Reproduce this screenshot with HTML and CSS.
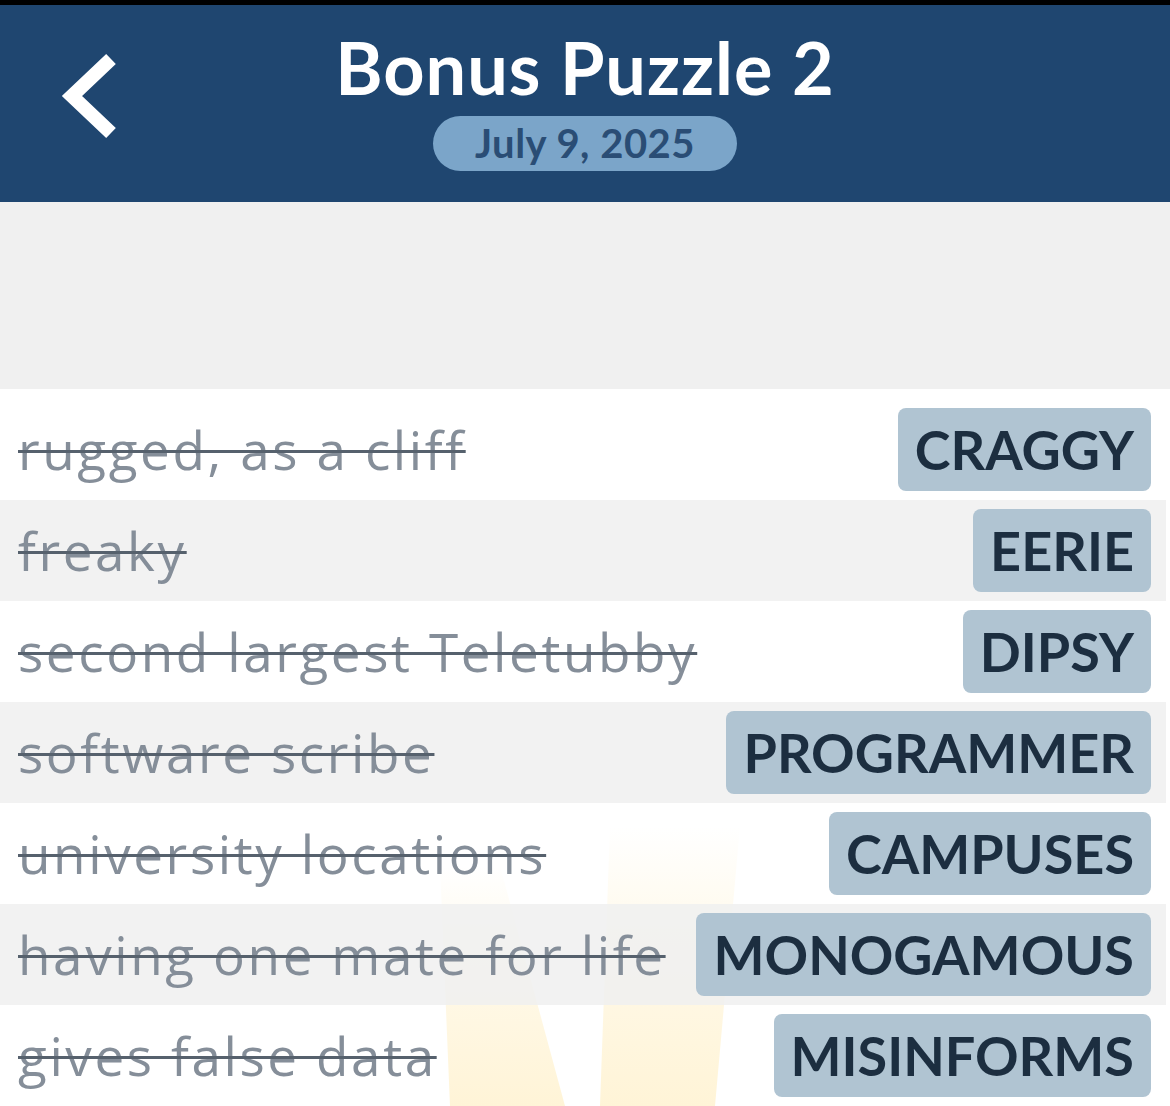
FILE: index.html
```html
<!DOCTYPE html>
<html lang="en">
<head>
    <meta charset="UTF-8">
    <meta name="viewport" content="width=device-width, initial-scale=1.0">
    <title>Bonus Puzzle 2</title>
    <link rel="stylesheet" href="styles.css">
</head>
<body>
    <header class="topbar">
        <a class="back" href="#" aria-label="Back">
            <svg width="60" height="90" viewBox="0 0 60 90">
                <polyline points="52,8 13,45 52,82" fill="none" stroke="#fff" stroke-width="14"/>
            </svg>
        </a>
        <div class="heading">
            <h1>Bonus Puzzle 2</h1>
            <div class="date">July 9, 2025</div>
        </div>
        <div class="spacer"></div>
    </header>

    <div class="board"></div>

    <div class="list">
        <svg class="rays" width="1170" height="300" viewBox="0 0 1170 300">
            <defs>
                <linearGradient id="fade" x1="0" y1="0" x2="0" y2="1">
                    <stop offset="0" stop-color="#ffd870" stop-opacity="0"/>
                    <stop offset="0.45" stop-color="#ffd870" stop-opacity="0.16"/>
                    <stop offset="1" stop-color="#ffd870" stop-opacity="0.28"/>
                </linearGradient>
            </defs>
            <polygon points="440,60 500,60 565,300 450,300" fill="url(#fade)"/>
            <polygon points="610,20 740,20 715,300 600,300" fill="url(#fade)"/>
        </svg>
        <div class="row">
            <span class="clue">rugged, as a cliff</span>
            <span class="answer">CRAGGY</span>
        </div>
        <div class="row">
            <span class="clue">freaky</span>
            <span class="answer">EERIE</span>
        </div>
        <div class="row">
            <span class="clue">second largest Teletubby</span>
            <span class="answer">DIPSY</span>
        </div>
        <div class="row">
            <span class="clue">software scribe</span>
            <span class="answer">PROGRAMMER</span>
        </div>
        <div class="row">
            <span class="clue">university locations</span>
            <span class="answer">CAMPUSES</span>
        </div>
        <div class="row">
            <span class="clue">having one mate for life</span>
            <span class="answer">MONOGAMOUS</span>
        </div>
        <div class="row">
            <span class="clue">gives false data</span>
            <span class="answer">MISINFORMS</span>
        </div>
    </div>
</body>
</html>
```

FILE: styles.css
```css
body {
    margin: 0;
    font-family: Lato, "Open Sans", sans-serif;
    background-color: #fff;
    overflow: hidden;
}
.topbar {
    display: grid;
    grid-template-columns: 1fr auto 1fr;
    align-items: center;
    height: 197px;
    border-top: 5px solid #000;
    background-color: #1f4670;
}
.back {
    display: flex;
    padding-left: 59px;
    padding-bottom: 16px;
}
.heading {
    display: flex;
    flex-direction: column;
    align-items: center;
    padding-bottom: 6px;
}
h1 {
    margin: 0;
    color: #fff;
    font-size: 72px;
    font-weight: 700;
    letter-spacing: 1px;
    line-height: 1;
}
.date {
    margin-top: 13px;
    width: 304px;
    height: 55px;
    border-radius: 28px;
    background-color: #7ba5c9;
    color: #2a4d75;
    font-size: 40px;
    font-weight: 700;
    letter-spacing: 0.5px;
    line-height: 55px;
    text-align: center;
}
.board {
    height: 187px;
    background-color: #f0f0f0;
}
.list {
    position: relative;
    padding-top: 10px;
}
.rays {
    position: absolute;
    left: 0;
    bottom: 0;
    pointer-events: none;
}
.row {
    position: relative;
    display: flex;
    align-items: center;
    justify-content: space-between;
    height: 101px;
    margin-right: 4px;
    padding: 0 15px 0 18px;
}
.row:nth-child(odd) {
    background-color: rgba(240, 240, 240, 0.85);
}
.clue {
    color: #858e99;
    font-family: "Open Sans", Lato, sans-serif;
    font-size: 53px;
    letter-spacing: 2.6px;
    text-decoration: line-through;
    text-decoration-color: #56616d;
    text-decoration-thickness: 3px;
}
.answer {
    height: 83px;
    padding: 0 17px;
    border-radius: 8px;
    background-color: #b0c4d2;
    color: #1c2e40;
    font-size: 54px;
    font-weight: 700;
    line-height: 83px;
}
```
